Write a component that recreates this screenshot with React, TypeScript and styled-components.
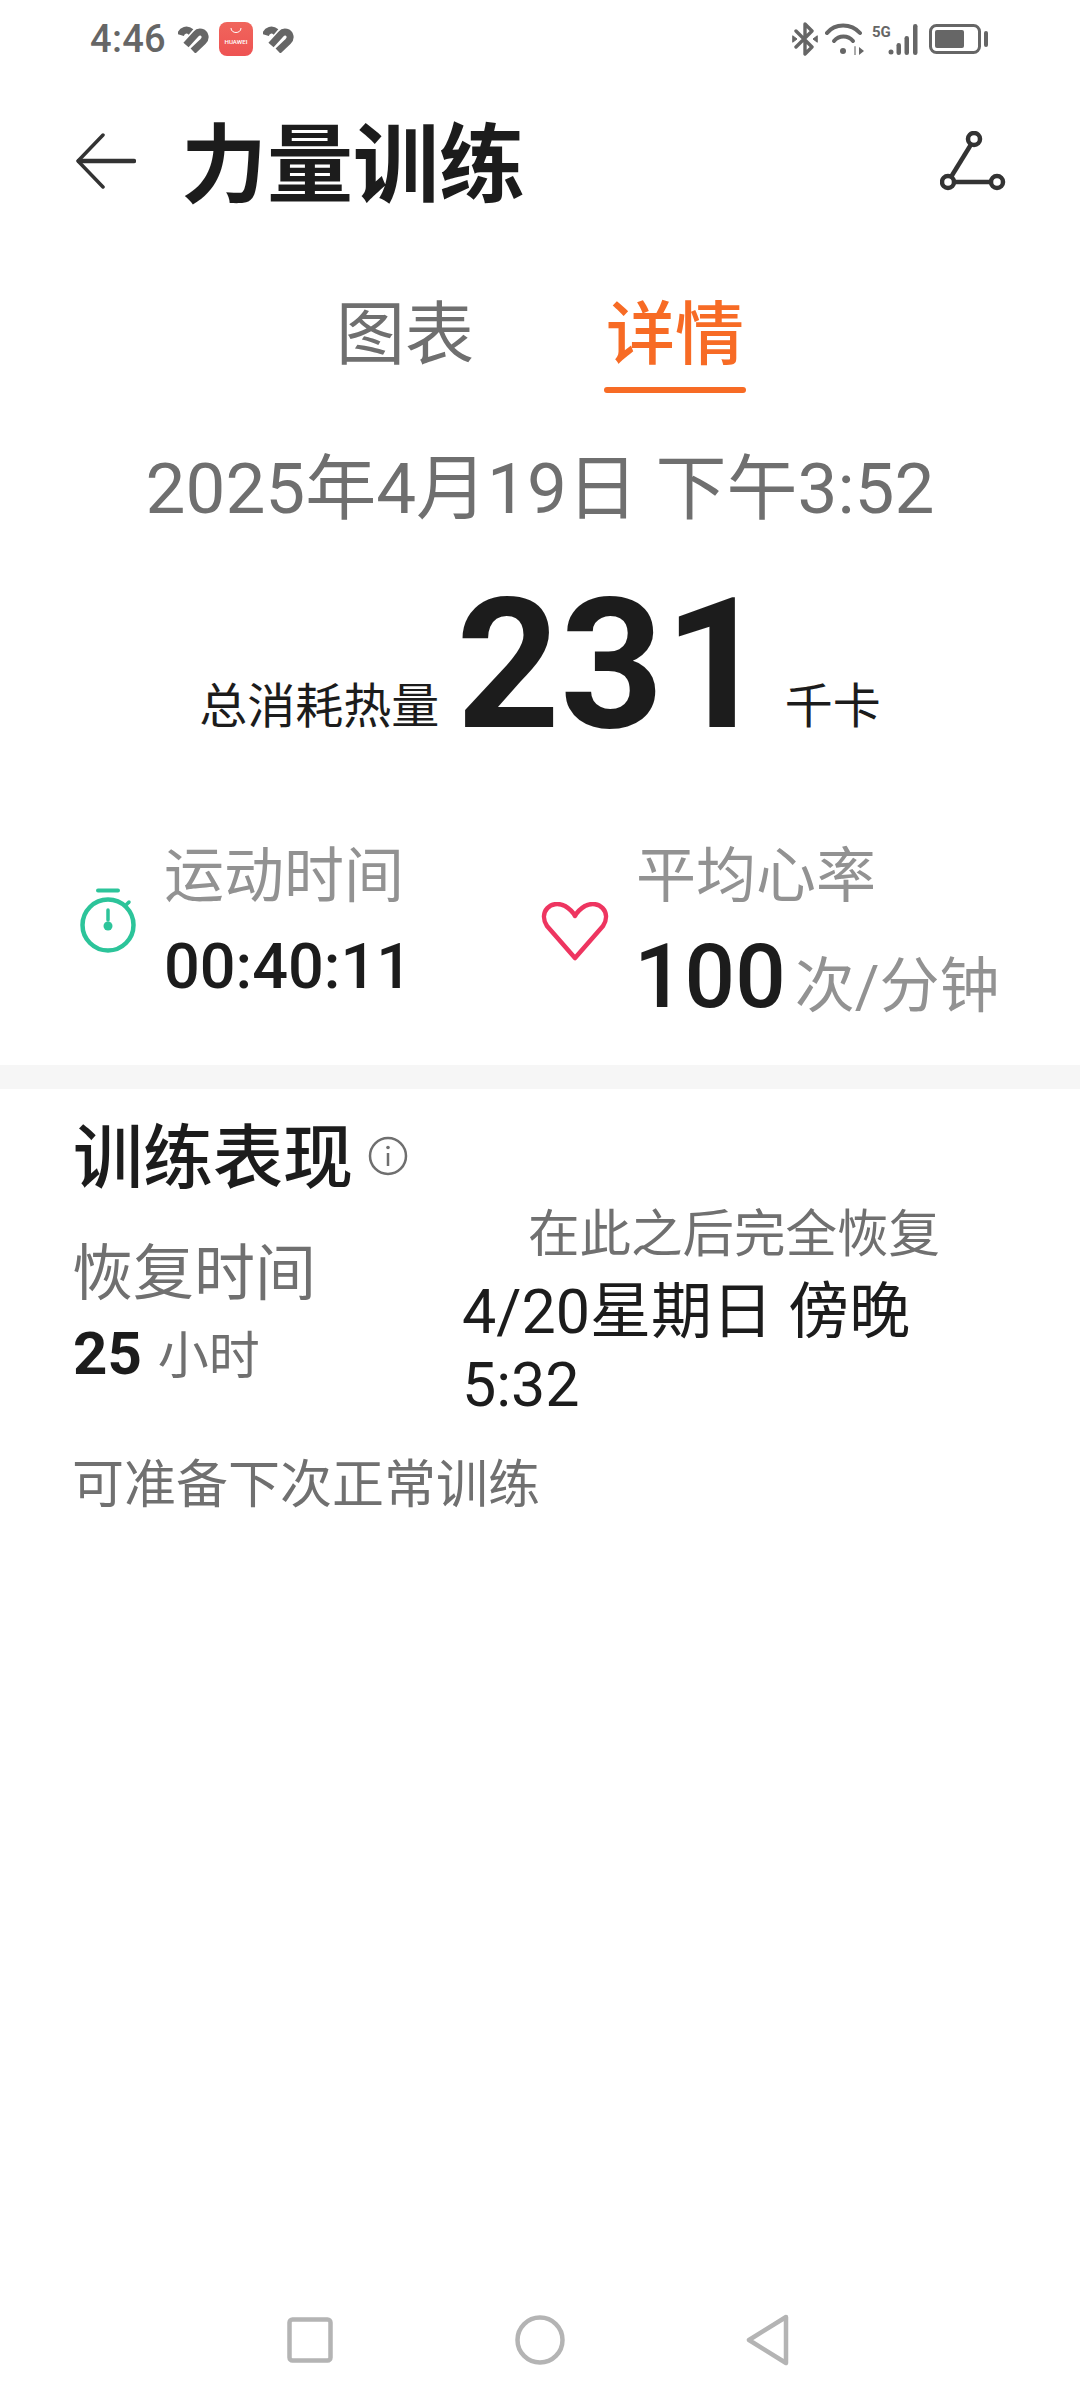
import React from "react";
import styled, { createGlobalStyle } from "styled-components";

const Global = createGlobalStyle`
  html, body { margin: 0; padding: 0; background: #fff; }
  body { font-family: Roboto, "Noto Sans CJK SC", sans-serif; }
  * { box-sizing: border-box; }
`;

const Page = styled.div`
  width: 1080px;
  height: 2400px;
  display: flex;
  flex-direction: column;
  background: #fff;
  overflow: hidden;
`;

const StatusBar = styled.div`
  height: 78px;
  padding: 0 91px 0 90px;
  display: flex;
  align-items: center;
  justify-content: space-between;
  color: #666;
`;
const StatusGroup = styled.div<{ $gap: number }>`
  display: flex;
  align-items: center;
  gap: ${(p) => p.$gap}px;
`;
const Time = styled.span`
  font-size: 38px;
  line-height: 44px;
  font-weight: 500;
  color: #666;
  margin-right: 2px;
  letter-spacing: 0.3px;
`;

const Header = styled.div`
  height: 174px;
  padding: 0 74px 8px 76px;
  display: flex;
  align-items: center;
`;
const Title = styled.h1`
  margin: 12px 0 0 45px;
  font-size: 86px;
  line-height: 100px;
  font-weight: 700;
  color: #1c1c1c;
  flex: 1;
`;

const Tabs = styled.div`
  height: 192px;
  display: flex;
  justify-content: center;
  gap: 132px;
  padding-top: 44px;
`;
const Tab = styled.div<{ $active?: boolean }>`
  position: relative;
  font-size: 69px;
  line-height: 80px;
  height: 80px;
  font-weight: ${(p) => (p.$active ? 500 : 400)};
  color: ${(p) => (p.$active ? "#f76b25" : "#6f6f6f")};
  &::after {
    content: "";
    display: ${(p) => (p.$active ? "block" : "none")};
    position: absolute;
    left: -2px;
    right: -2px;
    top: 91px;
    height: 6px;
    border-radius: 3px;
    background: #f76b25;
  }
`;

const DateLine = styled.div`
  text-align: center;
  font-size: 71px;
  line-height: 90px;
  color: #6f6f6f;
`;

const Total = styled.div`
  margin-top: 46px;
  height: 170px;
  display: flex;
  justify-content: center;
  align-items: center;
  color: #1c1c1c;
`;
const TotalLabel = styled.span`
  font-size: 48px;
  line-height: 60px;
  margin-top: 84px;
`;
const TotalValue = styled.span`
  font-size: 181px;
  line-height: 170px;
  font-weight: 700;
  margin: 0 17px 0 17px;
  color: #1c1c1c;
`;

const Stats = styled.div`
  margin-top: 92px;
  height: 223px;
  display: grid;
  grid-template-columns: 462px 1fr;
  padding-left: 79px;
`;
const Stat = styled.div`
  display: flex;
  align-items: flex-start;
  gap: 27px;
`;
const StatBody = styled.div`
  display: flex;
  flex-direction: column;
`;
const StatLabel = styled.div`
  font-size: 60px;
  line-height: 70px;
  color: #929292;
`;
const StatIcon = styled.div<{ $top: number }>`
  margin-top: ${(p) => p.$top}px;
  display: flex;
`;
const Duration = styled.div`
  margin-top: 19px;
  font-size: 63px;
  line-height: 72px;
  font-weight: 500;
  color: #1c1c1c;
`;
const Rate = styled.div`
  margin-top: 17px;
  margin-left: -2px;
  display: flex;
  align-items: baseline;
  gap: 9px;
`;
const RateValue = styled.span`
  font-size: 89px;
  line-height: 96px;
  font-weight: 500;
  color: #1c1c1c;
`;
const RateUnit = styled.span`
  font-size: 60px;
  line-height: 70px;
  color: #929292;
`;

const Divider = styled.div`
  height: 24px;
  background: #f6f6f6;
`;

const Perf = styled.div`
  padding: 28px 73px 0;
`;
const PerfHead = styled.div`
  display: flex;
  align-items: center;
  gap: 15px;
`;
const PerfTitle = styled.h2`
  margin: 0;
  font-size: 70px;
  line-height: 84px;
  font-weight: 500;
  color: #1c1c1c;
`;
const InfoSlot = styled.div`
  display: flex;
  margin-bottom: 6px;
`;
const Recovery = styled.div`
  display: grid;
  grid-template-columns: 390px 542px;
`;
const RecoveryLeft = styled.div`
  padding-top: 37px;
`;
const RecoveryLabel = styled.div`
  font-size: 61px;
  margin-left: -1px;
  line-height: 72px;
  color: #707070;
`;
const Hours = styled.div`
  margin-top: 9px;
  display: flex;
  align-items: baseline;
  gap: 16px;
`;
const HoursValue = styled.span`
  font-size: 60px;
  line-height: 70px;
  font-weight: 700;
  color: #1c1c1c;
`;
const HoursUnit = styled.span`
  font-size: 51px;
  line-height: 70px;
  color: #707070;
`;
const RecoveryRight = styled.div`
  padding-top: 3px;
`;
const RecoveryRightLabel = styled.div`
  font-size: 51.5px;
  line-height: 62px;
  text-align: center;
  color: #707070;
`;
const RecoveryValue = styled.div`
  margin-top: 10px;
  margin-left: -1px;
  font-size: 61px;
  line-height: 73px;
  color: #1c1c1c;
`;
const Note = styled.div`
  margin-top: 32px;
  margin-left: -1px;
  font-size: 52px;
  line-height: 64px;
  color: #707070;
`;

const NavBar = styled.div`
  height: 120px;
  margin-top: auto;
  padding: 0 290px 1px 287px;
  display: flex;
  align-items: center;
  justify-content: space-between;
`;

const HeartMark = () => (
  <svg width="31" height="27" viewBox="0 0 31 27" fill="none" stroke="#666" strokeWidth="7">
    <path d="M2.5 9 C4 4 9 2.5 13 6" />
    <path d="M8 19 L18 8 C21 4.5 26 6 27 10 C27.5 12 27 13.5 25 15.5 L15 25" />
  </svg>
);

const AppGallery = () => (
  <svg width="34" height="34" viewBox="0 0 34 34">
    <defs>
      <linearGradient id="ag" x1="0" y1="0" x2="0" y2="1">
        <stop offset="0" stopColor="#f0655c" />
        <stop offset="1" stopColor="#ee5353" />
      </linearGradient>
    </defs>
    <rect width="34" height="34" rx="8" fill="url(#ag)" />
    <path d="M12 6 C12 12 22 12 22 6" stroke="#fff" strokeWidth="1" fill="none" />
    <text x="17" y="22" fontSize="6.2" fontWeight="500" fill="#fff" textAnchor="middle" fontFamily="Roboto, sans-serif">HUAWEI</text>
  </svg>
);

const Bluetooth = () => (
  <svg width="26" height="34" viewBox="0 0 26 34" fill="none" stroke="#666" strokeWidth="3.4" strokeLinecap="round" strokeLinejoin="round">
    <path d="M4 9 L20 25 L13 32 V2 L20 9 L4 25" />
    <path d="M1 14 L5 17 L1 20 Z" fill="#666" strokeWidth="1" />
    <path d="M25 14 L21 17 L25 20 Z" fill="#666" strokeWidth="1" />
  </svg>
);

const Wifi = () => (
  <svg width="40" height="32" viewBox="0 0 40 32" fill="none" stroke="#666" strokeWidth="4" strokeLinecap="round">
    <path d="M2 10 C10 0 26 0 35 10" />
    <path d="M9 18 C14 12 23 12 28 18" />
    <circle cx="18" cy="28" r="3" fill="#666" stroke="none" />
    <path d="M34 24 L39 28 L34 32 Z" fill="#666" stroke="none" />
    <path d="M30 24 V32" stroke="#aaa" strokeWidth="2" />
  </svg>
);

const Signal = () => (
  <svg width="50" height="32" viewBox="0 0 50 32" fill="#666">
    <text x="0" y="14" fontSize="15" fontWeight="700" fontFamily="Roboto, sans-serif">5G</text>
    <circle cx="19" cy="29" r="2.5" />
    <rect x="24.5" y="20" width="4.5" height="12" rx="2.2" />
    <rect x="32.5" y="13" width="4.5" height="19" rx="2.2" />
    <rect x="41" y="1" width="4.5" height="31" rx="2.2" />
  </svg>
);

const Battery = () => (
  <svg width="60" height="30" viewBox="0 0 60 30" fill="none">
    <rect x="1.5" y="1.5" width="49" height="27" rx="6" stroke="#666" strokeWidth="3" />
    <rect x="6" y="6" width="29" height="18" rx="2" fill="#666" />
    <rect x="55" y="7" width="4" height="16" rx="2" fill="#666" />
  </svg>
);

const BackIcon = () => (
  <svg width="60" height="56" viewBox="0 0 60 56" fill="none" stroke="#333" strokeLinecap="round" strokeLinejoin="round">
    <path d="M27 2 L2 28 L27 54" strokeWidth="3.5" />
    <path d="M3 28 H58" strokeWidth="4.5" />
  </svg>
);

const RouteIcon = () => (
  <svg width="66" height="60" viewBox="0 0 66 60" fill="none" stroke="#333" strokeWidth="4.5">
    <circle cx="34" cy="8" r="6" />
    <circle cx="8" cy="51" r="6" />
    <circle cx="57" cy="51" r="6" />
    <path d="M31 13.5 L11 46" />
    <path d="M14 51 H51" />
  </svg>
);

const Stopwatch = () => (
  <svg width="58" height="66" viewBox="0 0 58 66" fill="none" stroke="#2cc49a" strokeLinecap="round">
    <path d="M19 2.5 H39" strokeWidth="4" />
    <circle cx="29" cy="37" r="25.5" strokeWidth="4.5" />
    <path d="M47 17 L50 14" strokeWidth="3.5" />
    <path d="M29 22 V32" strokeWidth="3.5" />
    <circle cx="29" cy="38" r="4.5" fill="#2cc49a" stroke="none" />
  </svg>
);

const Heart = () => (
  <svg width="68" height="60" viewBox="0 0 68 60" fill="none">
    <path
      d="M34 56 L6 24 C-3 10 10 -3 24 4 C29 7 32 10 34 14 C36 10 39 7 44 4 C58 -3 71 10 62 24 Z"
      stroke="#ee3560"
      strokeWidth="4.5"
      strokeLinejoin="round"
    />
  </svg>
);

const InfoIcon = () => (
  <svg width="40" height="40" viewBox="0 0 40 40" fill="none" stroke="#6f6f6f">
    <circle cx="20" cy="20" r="18" strokeWidth="2.5" />
    <path d="M20 17 V30" strokeWidth="2.5" />
    <circle cx="20" cy="11.5" r="1.8" fill="#6f6f6f" stroke="none" />
  </svg>
);

const NavSquare = () => (
  <svg width="46" height="46" viewBox="0 0 46 46" fill="none">
    <rect x="2.5" y="2.5" width="41" height="41" rx="3" stroke="#b4b4b4" strokeWidth="4.5" />
  </svg>
);
const NavCircle = () => (
  <svg width="50" height="50" viewBox="0 0 50 50" fill="none">
    <circle cx="25" cy="25" r="22.5" stroke="#b4b4b4" strokeWidth="4.5" />
  </svg>
);
const NavBack = () => (
  <svg width="44" height="52" viewBox="0 0 44 52" fill="none">
    <path d="M40 3 L3 26 L40 49 Z" stroke="#b4b4b4" strokeWidth="4.5" strokeLinejoin="round" />
  </svg>
);

export default function App() {
  return (
    <Page>
      <Global />
      <StatusBar>
        <StatusGroup $gap={10}>
          <Time>4:46</Time>
          <HeartMark />
          <AppGallery />
          <HeartMark />
        </StatusGroup>
        <StatusGroup $gap={7}>
          <Bluetooth />
          <Wifi />
          <Signal />
          <Battery />
        </StatusGroup>
      </StatusBar>
      <Header>
        <BackIcon />
        <Title>力量训练</Title>
        <RouteIcon />
      </Header>
      <Tabs>
        <Tab>图表</Tab>
        <Tab $active>详情</Tab>
      </Tabs>
      <DateLine>2025年4月19日 下午3:52</DateLine>
      <Total>
        <TotalLabel>总消耗热量</TotalLabel>
        <TotalValue>231</TotalValue>
        <TotalLabel>千卡</TotalLabel>
      </Total>
      <Stats>
        <Stat>
          <StatIcon $top={46}>
            <Stopwatch />
          </StatIcon>
          <StatBody>
            <StatLabel>运动时间</StatLabel>
            <Duration>00:40:11</Duration>
          </StatBody>
        </Stat>
        <Stat>
          <StatIcon $top={60}>
            <Heart />
          </StatIcon>
          <StatBody>
            <StatLabel>平均心率</StatLabel>
            <Rate>
              <RateValue>100</RateValue>
              <RateUnit>次/分钟</RateUnit>
            </Rate>
          </StatBody>
        </Stat>
      </Stats>
      <Divider />
      <Perf>
        <PerfHead>
          <PerfTitle>训练表现</PerfTitle>
          <InfoSlot>
            <InfoIcon />
          </InfoSlot>
        </PerfHead>
        <Recovery>
          <RecoveryLeft>
            <RecoveryLabel>恢复时间</RecoveryLabel>
            <Hours>
              <HoursValue>25</HoursValue>
              <HoursUnit>小时</HoursUnit>
            </Hours>
          </RecoveryLeft>
          <RecoveryRight>
            <RecoveryRightLabel>在此之后完全恢复</RecoveryRightLabel>
            <RecoveryValue>4/20星期日 傍晚 5:32</RecoveryValue>
          </RecoveryRight>
        </Recovery>
        <Note>可准备下次正常训练</Note>
      </Perf>
      <NavBar>
        <NavSquare />
        <NavCircle />
        <NavBack />
      </NavBar>
    </Page>
  );
}
